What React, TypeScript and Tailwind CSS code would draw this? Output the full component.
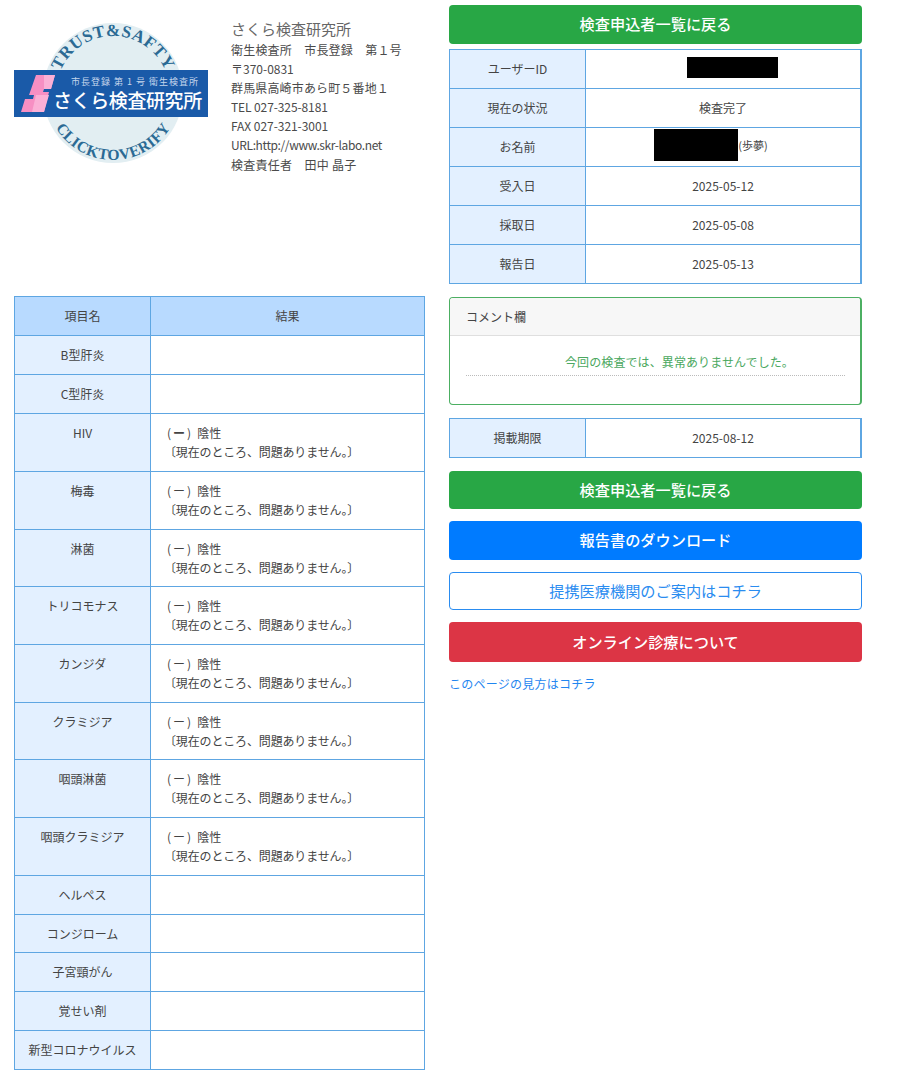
const tests = [
  { name: "B型肝炎", h: "h-[39px]" },
  { name: "C型肝炎", h: "h-[39px]" },
  { name: "HIV", result: true, bold: true, h: "h-[58px]" },
  { name: "梅毒", result: true, h: "h-[58px]" },
  { name: "淋菌", result: true, h: "h-[57px]" },
  { name: "トリコモナス", result: true, h: "h-[58px]" },
  { name: "カンジダ", result: true, h: "h-[58px]" },
  { name: "クラミジア", result: true, h: "h-[57px]" },
  { name: "咽頭淋菌", result: true, h: "h-[58px]" },
  { name: "咽頭クラミジア", result: true, h: "h-[58px]" },
  { name: "ヘルペス", h: "h-[39px]" },
  { name: "コンジローム", h: "h-[38px]" },
  { name: "子宮頸がん", h: "h-[39px]" },
  { name: "覚せい剤", h: "h-[39px]" },
  { name: "新型コロナウイルス", h: "h-[39px]" },
];

function Logo() {
  return (
    <svg viewBox="0 0 196 142" className="w-[196px] h-[142px] block overflow-visible" aria-hidden="true">
      <circle cx="99" cy="70" r="70" fill="#e2eef2" />
      <defs>
        <path id="arcTop" d="M 42 70 A 57 57 0 0 1 156 70" />
        <path id="arcBottom" d="M 32 70 A 67 67 0 0 0 166 70" />
      </defs>
      <text fontFamily="Liberation Serif, serif" fontSize="17" fontWeight="700" fill="#2b6a94" letterSpacing="0.6">
        <textPath href="#arcTop" startOffset="50%" textAnchor="middle">TRUST&amp;SAFTY</textPath>
      </text>
      <text fontFamily="Liberation Serif, serif" fontSize="15.5" fontWeight="700" fill="#2b6a94" letterSpacing="0.4">
        <textPath href="#arcBottom" startOffset="50%" textAnchor="middle">CLICKTOVERIFY</textPath>
      </text>
      <rect x="0" y="47" width="194" height="47" fill="#1a5aa8" />
      {/* pink S mark: two offset slanted blocks */}
      <path d="M22 52 H41 L37 66 H30 L29 69 H35 L30 89 H7 L11 76 H19 L20 72 H15 Z" fill="#f78fc3" />
      <path d="M30 52 H41 L37 66 H30 Z M22 72 H35 L30 89 H18 Z" fill="#fbb0d6" />
      <text x="57" y="62" fill="#c4d6ec" fontSize="9" fontFamily="Noto Sans CJK JP, sans-serif" letterSpacing="1">市長登録 第 1 号 衛生検査所</text>
      <text x="39" y="85" fill="#ffffff" fontSize="19" fontWeight="500" fontFamily="Noto Sans CJK JP, sans-serif" letterSpacing="-0.4">さくら検査研究所</text>
    </svg>
  );
}

function InfoRow({ label, children }: { label: string; children: React.ReactNode }) {
  return (
    <tr className="h-[39px]">
      <th className="w-[136px] border border-[#5ea6e2] bg-[#e3f0ff] font-normal text-center">{label}</th>
      <td className="border border-[#5ea6e2] border-r-2 text-center">{children}</td>
    </tr>
  );
}

function ActionButton({ className, children }: { className: string; children: React.ReactNode }) {
  return (
    <a className={`flex items-center justify-center rounded-[4px] pb-[2px] text-[15.2px] font-medium ${className}`}>
      {children}
    </a>
  );
}

export default function App() {
  return (
    <div
      className="w-[900px] h-[1090px] bg-white flex gap-[24px] pl-[14px] text-[12px] text-[#444]"
      style={{ fontFamily: '"Noto Sans CJK JP", sans-serif' }}
    >
      {/* left column */}
      <div className="w-[411px] shrink-0">
        <div className="h-[296px] flex items-start">
          <div className="pt-[23px] w-[217px] shrink-0">
            <Logo />
          </div>
          <div className="pt-[19px] leading-[19.1px] text-[#4a4a4a]">
            <div className="text-[15px] leading-[20px] text-[#666] mb-[1px]">さくら検査研究所</div>
            <div className="tracking-[0.2px]">衛生検査所　市長登録　第１号</div>
            <div>〒370-0831</div>
            <div className="tracking-[0.15px]">群馬県高崎市あら町５番地１</div>
            <div className="tracking-[-0.1px]">TEL 027-325-8181</div>
            <div className="tracking-[-0.05px]">FAX 027-321-3001</div>
            <div className="tracking-[-0.38px]">URL:http://www.skr-labo.net</div>
            <div className="tracking-[0.25px]">検査責任者　田中 晶子</div>
          </div>
        </div>
        <table className="w-full border-collapse">
          <thead>
            <tr className="h-[39px] bg-[#b8daff]">
              <th className="w-[136px] border border-[#5ea6e2] font-normal">項目名</th>
              <th className="border border-[#5ea6e2] font-normal">結果</th>
            </tr>
          </thead>
          <tbody>
            {tests.map((t) => (
              <tr key={t.name} className={t.h}>
                <th className={`border border-[#5ea6e2] bg-[#e3f0ff] font-normal text-center ${t.result ? "align-top pt-[10px]" : ""}`}>
                  {t.name}
                </th>
                <td className="border border-[#5ea6e2] pl-[16px] leading-[19px] align-top pt-[9px]">
                  {t.result && (
                    <>
                      <div>
                        (<span className={`mx-[2px] ${t.bold ? "font-bold" : ""}`}>ー</span>)<span className="ml-[6px]">陰性</span>
                      </div>
                      <div className="-ml-[3px] tracking-[-0.15px]">〔現在のところ、問題ありません。〕</div>
                    </>
                  )}
                </td>
              </tr>
            ))}
          </tbody>
        </table>
      </div>

      {/* right column */}
      <div className="w-[413px] shrink-0 pt-[5px]">
        <ActionButton className="h-[39px] bg-[#28a745] text-white">検査申込者一覧に戻る</ActionButton>
        <table className="w-full border-collapse mt-[5px]">
          <tbody>
            <InfoRow label="ユーザーID">
              <span className="inline-block align-middle w-[91px] h-[21px] bg-black ml-[18px] mb-[4px]" />
            </InfoRow>
            <InfoRow label="現在の状況">検査完了</InfoRow>
            <InfoRow label="お名前">
              <span className="inline-flex items-center mr-[24px]">
                <span className="w-[84px] h-[32px] bg-black" />
                <span className="text-[11px]">(歩夢)</span>
              </span>
            </InfoRow>
            <InfoRow label="受入日">2025-05-12</InfoRow>
            <InfoRow label="採取日">2025-05-08</InfoRow>
            <InfoRow label="報告日">2025-05-13</InfoRow>
          </tbody>
        </table>

        <div className="mt-[13px] h-[108px] border border-[#4caf62] border-r-2 rounded-[4px] overflow-hidden">
          <div className="h-[38px] flex items-center px-[16px] bg-[#f7f7f7] border-b border-[#dfdfdf]">コメント欄</div>
          <div className="pl-[16px] pr-[15px] pt-[16px]">
            <div className="h-[24px] pl-[99px] border-b border-dotted border-[#bbb] text-[#4aa860] leading-[19px] tracking-[0.1px]">
              今回の検査では、異常ありませんでした。
            </div>
          </div>
        </div>

        <table className="w-full border-collapse mt-[13px]">
          <tbody>
            <InfoRow label="掲載期限">2025-08-12</InfoRow>
          </tbody>
        </table>

        <div className="mt-[13px] flex flex-col gap-[12px]">
          <ActionButton className="h-[38px] bg-[#28a745] text-white">検査申込者一覧に戻る</ActionButton>
          <ActionButton className="h-[39px] bg-[#007bff] text-white">報告書のダウンロード</ActionButton>
          <ActionButton className="h-[38px] border border-[#2a8cf0] text-[#2a8cf0] font-normal">提携医療機関のご案内はコチラ</ActionButton>
          <ActionButton className="h-[40px] bg-[#dc3545] text-white">オンライン診療について</ActionButton>
        </div>
        <a className="block mt-[13px] text-[#1f86f0] leading-[18px] tracking-[0.25px]">このページの見方はコチラ</a>
      </div>
    </div>
  );
}
